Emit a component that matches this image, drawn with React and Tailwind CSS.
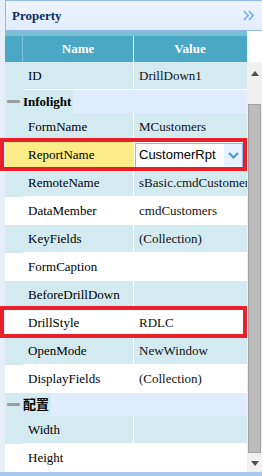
import React from 'react';

const serif = { fontFamily: '"Liberation Serif", "Noto Sans CJK SC", serif' };

const sections = [
  { title: null, rows: [['ID', 'DrillDown1']] },
  {
    title: 'Infolight',
    rows: [
      ['FormName', 'MCustomers'],
      ['ReportName', 'CustomerRpt', 'combo'],
      ['RemoteName', 'sBasic.cmdCustomers'],
      ['DataMember', 'cmdCustomers'],
      ['KeyFields', '(Collection)'],
      ['FormCaption', ''],
      ['BeforeDrillDown', ''],
      ['DrillStyle', 'RDLC'],
      ['OpenMode', 'NewWindow'],
      ['DisplayFields', '(Collection)'],
    ],
  },
  { title: '配置', rows: [['Width', ''], ['Height', '']] },
];

function GroupRow({ title }) {
  return (
    <div className="flex h-[23px] items-center bg-[#e0ecff]">
      <div className="flex h-full w-[18px] items-center bg-[#d3eaf1]">
        <div className="ml-[2px] h-[3px] w-[13px] rounded-[1px] bg-[#9e9e9e]" />
      </div>
      <div className="flex h-full items-center bg-[#d3eaf1] pr-[2px] text-[13px] font-bold text-black">
        {title}
      </div>
    </div>
  );
}

function Row({ row, odd }) {
  const [name, value, kind] = row;
  const bg = odd ? 'bg-white' : 'bg-[#d3eaf1]';
  if (kind === 'combo') {
    return (
      <div className="flex h-[28px] bg-white">
        <div className="flex w-[129px] items-center bg-[#fbec88] pl-[23px] text-[13px] text-black">{name}</div>
        <div className="flex w-[113px] items-center pl-[1px] pr-[4px]">
          <div className="flex h-[25px] w-full items-center border border-[#95b8e7] bg-white">
            <span className="flex-1 pl-[3px] text-[13px] text-black" style={{ fontFamily: '"Liberation Sans", sans-serif' }}>
              {value}
            </span>
            <span className="flex h-full w-[18px] items-center justify-center bg-[#e8f1ff]">
              <svg width="11" height="7" viewBox="0 0 11 7">
                <polyline points="1,1 5.5,5.5 10,1" fill="none" stroke="#3d9ae8" strokeWidth="2.2" />
              </svg>
            </span>
          </div>
        </div>
      </div>
    );
  }
  return (
    <div className={`flex h-[28px] ${bg}`}>
      <div className="w-[18px]" />
      <div className="flex w-[111px] items-center overflow-hidden whitespace-nowrap border-b border-r border-white pl-[5px] text-[13px] text-black">
        {name}
      </div>
      <div className="flex w-[113px] items-center overflow-hidden whitespace-nowrap border-b border-white pl-[5px] text-[13px] text-[#111]">
        {value}
      </div>
    </div>
  );
}

export default function App() {
  return (
    <div className="relative flex h-[476px] w-[262px] flex-col overflow-hidden bg-[#e6eef8]" style={serif}>
      {/* panel header */}
      <div className="ml-[5px] flex h-[31px] items-center justify-between border-b border-l border-t border-[#95b8e7] bg-gradient-to-b from-[#eff5ff] to-[#e0ecff] pl-[6px] pr-[7px]">
        <span className="text-[13px] font-bold text-[#0e2d5f]">Property</span>
        <svg width="12" height="11" viewBox="0 0 12 11">
          <polyline points="1,1 5,5.5 1,10" fill="none" stroke="#74b3ef" strokeWidth="1.8" />
          <polyline points="6,1 10,5.5 6,10" fill="none" stroke="#74b3ef" strokeWidth="1.8" />
        </svg>
      </div>

      <div className="ml-[5px] flex flex-1">
        <div className="flex w-[242px] flex-col">
          {/* column headers */}
          <div className="flex h-[31px] border-t-[5px] border-[#79c0d5] bg-[#4aa8c5] text-[13px] font-bold text-white">
            <div className="w-[18px] border-r border-[#7fc4d9]" />
            <div className="flex w-[111px] items-center justify-center border-r border-white">Name</div>
            <div className="flex w-[112px] items-center justify-center">Value</div>
          </div>
          {sections.map((s, si) => (
            <div key={si}>
              {s.title && <GroupRow title={s.title} />}
              {s.rows.map((r, ri) => (
                <Row key={r[0]} row={r} odd={ri % 2 === 1} />
              ))}
            </div>
          ))}
        </div>

        {/* scrollbar */}
        <div className="flex w-[15px] flex-col bg-white">
          <div className="h-[31px]" />
          <div className="flex flex-1 flex-col bg-[#f0f0f0]">
            <div className="flex h-[42px] justify-center pt-[9px]">
              <svg width="8" height="5" viewBox="0 0 8 5"><polygon points="0,5 4,0 8,5" fill="#505050" /></svg>
            </div>
            <div className="mx-[1px] flex-1 border border-[#a3a3a3] bg-[#bcbcbc]" />
            <div className="flex h-[19px] justify-center pt-[8px]">
              <svg width="8" height="5" viewBox="0 0 8 5"><polygon points="0,0 8,0 4,5" fill="#505050" /></svg>
            </div>
          </div>
        </div>
      </div>

      <div className="h-[4px] bg-[#a9c6ec]" />

      {/* highlight boxes */}
      <div className="absolute left-0 top-[138px] h-[33px] w-[247px] border-4 border-[#e8202a]" />
      <div className="absolute left-0 top-[306px] h-[32px] w-[247px] border-4 border-[#e8202a]" />
    </div>
  );
}
